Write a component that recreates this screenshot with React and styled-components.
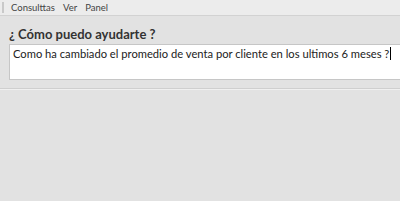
import React from 'react';
import styled, { createGlobalStyle } from 'styled-components';

const GlobalStyle = createGlobalStyle`
  html, body {
    margin: 0;
    padding: 0;
    background: #e2e2e2;
  }
  body {
    font-family: Lato, "Open Sans", sans-serif;
    width: 400px;
    height: 201px;
    overflow: hidden;
  }
`;

const MenuBar = styled.div`
  display: flex;
  align-items: center;
  height: 15px;
  background: #ececec;
  border-bottom: 1px solid #d2d2d2;
  padding-left: 2px;
`;

const Grip = styled.div`
  width: 2px;
  height: 11px;
  background: #c9c9c9;
  margin-right: 7px;
`;

const MenuItem = styled.span`
  font-size: 9.5px;
  color: #444;
  margin-right: 8px;
`;

const Panel = styled.div`
  padding: 9px 0 8px 9px;
  border-bottom: 1px solid #cfcfcf;
  box-shadow: 0 1px 0 #f0f0f0;
`;

const Title = styled.h2`
  margin: 0 0 1px 0;
  font-size: 13px;
  font-weight: 700;
  color: #333;
  line-height: 18px;
`;

const Question = styled.div`
  box-sizing: border-box;
  height: 36px;
  background: #fff;
  border: 1px solid #c6c6c6;
  border-right: none;
  padding: 1px 3px;
  font-size: 11.2px;
  line-height: 16px;
  color: #222;
  white-space: nowrap;
`;

const Caret = styled.span`
  display: inline-block;
  width: 1px;
  height: 13px;
  margin-left: 1px;
  background: #000;
  vertical-align: -2px;
`;

export default function App() {
  return (
    <>
      <GlobalStyle />
      <MenuBar>
        <Grip />
        <MenuItem>Consulttas</MenuItem>
        <MenuItem>Ver</MenuItem>
        <MenuItem>Panel</MenuItem>
      </MenuBar>
      <Panel>
        <Title>¿ Cómo puedo ayudarte ?</Title>
        <Question>
          Como ha cambiado el promedio de venta por cliente en los ultimos 6 meses ?
          <Caret />
        </Question>
      </Panel>
    </>
  );
}
